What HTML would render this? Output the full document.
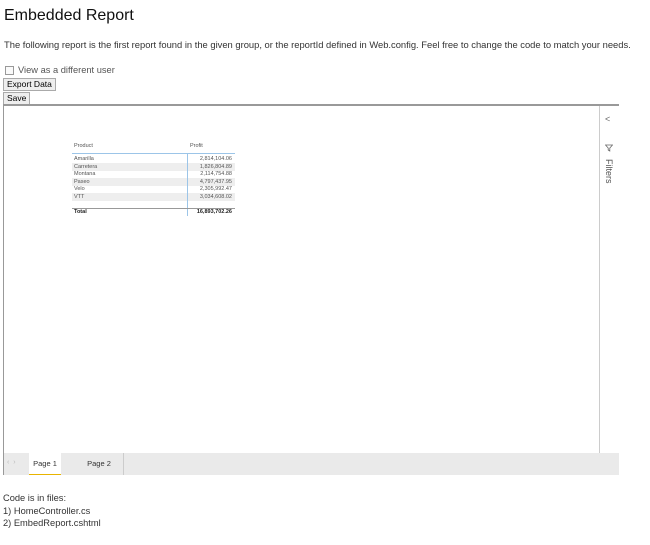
<!DOCTYPE html>
<html><head><style>
body{margin:0;width:650px;height:545px;background:#fff;font-family:"Liberation Sans",sans-serif;color:#222;position:relative;overflow:hidden}
.a{position:absolute;white-space:nowrap}
.btn{position:absolute;font-size:8.5px;border:1px solid #aaa;background:#eee;padding:0 3px;height:11px;line-height:11px;color:#000}
.t{position:absolute;font-size:5.5px;color:#555}
.r{position:absolute;left:72px;width:163px;height:7.5px}
</style></head><body>
<div class="a" style="left:4px;top:7px;font-size:16px;color:#111">Embedded Report</div>
<div class="a" style="left:4px;top:39px;font-size:9.4px;color:#333">The following report is the first report found in the given group, or the reportId defined in Web.config. Feel free to change the code to match your needs.</div>
<div class="a" style="left:5px;top:66px;width:7px;height:7px;border:1px solid #999;background:#fafafa"></div>
<div class="a" style="left:18px;top:65px;font-size:9.3px;color:#555">View as a different user</div>
<div class="btn" style="left:3px;top:78px">Export Data</div>
<div class="btn" style="left:3px;top:92px">Save</div>
<div class="a" style="left:3px;top:104px;width:616px;height:371px;border-top:2px solid #999;border-left:1px solid #999;box-sizing:border-box"></div>
<div class="a" style="left:599px;top:106px;width:20px;height:347px;border-left:1px solid #ccc;background:#fff"></div>
<div class="a" style="left:605px;top:114px;font-size:9px;color:#666">&lt;</div>
<svg class="a" style="left:605px;top:144px" width="8" height="8" viewBox="0 0 8 8"><path d="M0.5 1H7.5L4.8 4V7L3.2 6V4Z" fill="none" stroke="#666" stroke-width="0.8"/></svg>
<div class="a" style="left:604px;top:159px;font-size:9px;color:#555;writing-mode:vertical-rl">Filters</div>
<div class="a" style="left:4px;top:453px;width:615px;height:22px;background:#eaeaea"></div>
<div class="a" style="left:7px;top:459px;font-size:7px;color:#bbb">‹ &nbsp;›</div>
<div class="a" style="left:29px;top:453px;width:32px;height:21px;background:#fff;border-bottom:1px solid #e8b400;font-size:7.5px;text-align:center;line-height:21px;color:#333">Page 1</div>
<div class="a" style="left:75px;top:453px;width:48px;height:22px;border-right:1px solid #ccc;font-size:7.5px;text-align:center;line-height:22px;color:#333">Page 2</div>
<div class="t" style="left:74px;top:143px">Product</div>
<div class="t" style="left:190px;top:143px">Profit</div>
<div class="r" style="top:163px;background:#eee"></div>
<div class="r" style="top:178px;background:#eee"></div>
<div class="r" style="top:193px;background:#eee"></div>
<div class="a" style="left:72px;top:153px;width:163px;height:1px;background:#9cc5e8"></div>
<div class="a" style="left:187px;top:154px;width:1px;height:62px;background:#9cc5e8"></div>
<div class="a" style="left:72px;top:208px;width:163px;height:1px;background:#999"></div>
<div class="t" style="left:74px;top:156px">Amarilla</div><div class="t" style="left:190px;top:156px;width:42px;text-align:right">2,814,104.06</div>
<div class="t" style="left:74px;top:164px">Carretera</div><div class="t" style="left:190px;top:164px;width:42px;text-align:right">1,826,804.89</div>
<div class="t" style="left:74px;top:171px">Montana</div><div class="t" style="left:190px;top:171px;width:42px;text-align:right">2,114,754.88</div>
<div class="t" style="left:74px;top:179px">Paseo</div><div class="t" style="left:190px;top:179px;width:42px;text-align:right">4,797,437.95</div>
<div class="t" style="left:74px;top:186px">Velo</div><div class="t" style="left:190px;top:186px;width:42px;text-align:right">2,305,992.47</div>
<div class="t" style="left:74px;top:194px">VTT</div><div class="t" style="left:190px;top:194px;width:42px;text-align:right">3,034,608.02</div>
<div class="t" style="left:74px;top:209px;font-weight:bold;color:#222">Total</div><div class="t" style="left:186px;top:209px;width:46px;text-align:right;font-weight:bold;color:#222">16,893,702.26</div>
<div class="a" style="left:3px;top:492px;font-size:9.3px;color:#333;line-height:12.5px">Code is in files:<br>1) HomeController.cs<br>2) EmbedReport.cshtml</div>
</body></html>
